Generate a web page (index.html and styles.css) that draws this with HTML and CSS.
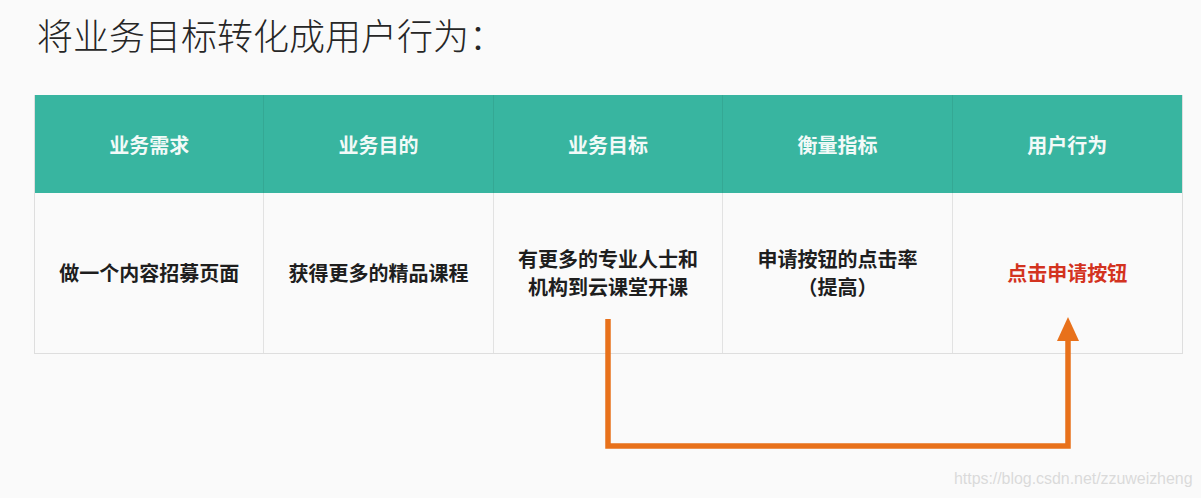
FILE: index.html
```html
<!DOCTYPE html>
<html lang="zh-CN">
<head>
<meta charset="utf-8">
<link rel="stylesheet" href="styles.css">
</head>
<body>
<div class="page">
  <h1 class="title">将业务目标转化成用户行为：</h1>
  <div class="table">
    <div class="th">业务需求</div>
    <div class="th">业务目的</div>
    <div class="th">业务目标</div>
    <div class="th">衡量指标</div>
    <div class="th last">用户行为</div>
    <div class="td">做一个内容招募页面</div>
    <div class="td">获得更多的精品课程</div>
    <div class="td">有更多的专业人士和<br>机构到云课堂开课</div>
    <div class="td">申请按钮的点击率<br>（提高）</div>
    <div class="td last red">点击申请按钮</div>
  </div>
  <svg class="arrow" width="1201" height="498" viewBox="0 0 1201 498">
    <polyline points="608,319 608,446 1068,446 1068,336" fill="none" stroke="#e8711b" stroke-width="5.5"/>
    <polygon points="1068,317 1057,341 1079,341" fill="#e8711b"/>
  </svg>
  <div class="watermark">https://blog.csdn.net/zzuweizheng</div>
</div>
</body>
</html>
```

FILE: styles.css
```css
html, body {
  margin: 0;
  padding: 0;
  background: #fafafa;
}
.page {
  position: relative;
  width: 1201px;
  height: 498px;
  padding: 16px 0 0 34px;
  box-sizing: border-box;
  font-family: "Noto Sans CJK SC", "Noto Sans", sans-serif;
}
.title {
  margin: 0 0 0 3px;
  font-size: 36px;
  line-height: 36px;
  font-weight: 300;
  color: #262626;
}
.table {
  margin-top: 43px;
  width: 1149px;
  display: grid;
  grid-template-columns: repeat(5, 1fr);
  grid-template-rows: 98px 160px;
  border: 1px solid #dedede;
  border-top: none;
  box-sizing: border-box;
}
.th {
  background: #38b5a0;
  color: #f2faf8;
  font-size: 20px;
  font-weight: 700;
  display: flex;
  align-items: center;
  justify-content: center;
  border-right: 1px solid #34a894;
}
.td {
  background: #fafafa;
  color: #1e1e1e;
  font-size: 20px;
  font-weight: 700;
  line-height: 28px;
  text-align: center;
  display: flex;
  align-items: center;
  justify-content: center;
  border-right: 1px solid #e2e2e2;
}
.last {
  border-right: none;
}
.red {
  color: #d3331f;
}
.arrow {
  position: absolute;
  left: 0;
  top: 0;
}
.watermark {
  position: absolute;
  left: 954px;
  top: 470px;
  font-family: "Liberation Sans", Arial, sans-serif;
  font-size: 16px;
  color: #dadada;
  letter-spacing: -0.05px;
}
```
